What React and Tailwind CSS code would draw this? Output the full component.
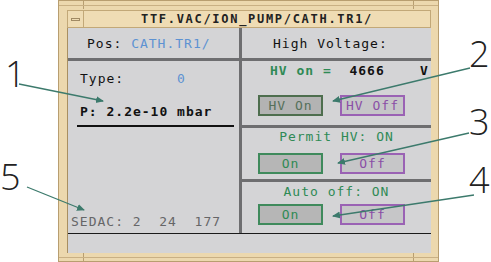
import React from "react";

const mono = { fontFamily: '"DejaVu Sans Mono", "Liberation Mono", monospace' };

// ── small button used in the HV panel ──
const PanelButton = ({ label, tone }) => {
  const styles =
    tone === "on"
      ? "bg-[#b6b6b6] border-[#3f8a5c] text-[#2f8a55]"
      : "bg-[#c6c6c8] border-[#9a62b4] text-[#8a4fa6]";
  return (
    <div
      className={`w-[65px] h-[21px] border-2 flex items-center justify-center text-[13px] leading-[15px] tracking-[1px] ${styles}`}
    >
      {label}
    </div>
  );
};

const HvSection = ({ title, className, btnGap, onLabel, offLabel, onTone = "on" }) => (
  <div className={`flex flex-col ${className}`}>
    <div className="h-[15px] text-center text-[13px] leading-[15px] tracking-[1px] text-[#2f8a55]">
      {title}
    </div>
    <div className={`flex gap-[17px] pl-[16px] ${btnGap}`}>
      <PanelButton label={onLabel} tone={onTone} />
      <PanelButton label={offLabel} tone="off" />
    </div>
  </div>
);

const App = () => {
  return (
    <div className="relative w-[491px] h-[262px] bg-white overflow-hidden" style={mono}>
      {/* window frame */}
      <div className="ml-[58px] w-[381px] h-[262px] border border-[#b89e70] bg-[#ecd8ae] flex flex-col pl-[8px] pr-[7px] pt-[9px] pb-[8px]">
        {/* title bar */}
        <div className="h-[18px] flex border border-[#c2a878] bg-[#efdcb4]">
          <div className="w-[16px] border-r border-[#c2a878] flex items-center justify-center">
            <div className="w-[9px] h-[3px] border border-[#a08a64]" />
          </div>
          <div className="flex-1 text-center text-[12px] leading-[16px] font-bold tracking-[1.7px] text-[#222]">
            TTF.VAC/ION_PUMP/CATH.TR1/
          </div>
        </div>

        {/* content */}
        <div className="flex-1 flex flex-col bg-[#d4d4d6] border-l border-[#a88f62]">
          <div className="h-[30px] flex">
            <div className="w-[171px] flex items-center pl-[19px] text-[13px] leading-[15px] tracking-[1px] text-[#111]">
              Pos:&nbsp;<span className="text-[#5d92d2]">CATH.TR1/</span>
            </div>
            <div className="w-[3px] bg-[#6e6e70]" />
            <div className="flex-1 flex items-center pl-[31px] text-[13px] leading-[15px] tracking-[1px] text-[#111]">
              High Voltage:
            </div>
          </div>
          <div className="h-[3px] bg-[#6e6e70]" />

          <div className="flex-1 flex">
            {/* left panel */}
            <div className="w-[171px] flex flex-col pt-[10px] pb-[4px] text-[13px] leading-[15px] tracking-[1px]">
              <div className="pl-[12px] text-[#111] whitespace-pre">
                Type:{"      "}
                <span className="text-[#5d92d2]">0</span>
              </div>
              <div className="pl-[12px] mt-[18px] font-bold text-[#111]">P: 2.2e-10 mbar</div>
              <div className="ml-[9px] mt-[6px] w-[157px] h-[2px] bg-[#111]" />
              <div className="mt-auto pl-[3px] text-[#666668] whitespace-pre">SEDAC: 2  24  177</div>
            </div>
            <div className="w-[3px] bg-[#6e6e70]" />

            {/* right panel */}
            <div className="flex-1 flex flex-col">
              <div className="h-[64px] flex flex-col pt-[2px]">
                <div className="h-[15px] pl-[28px] text-[13px] leading-[15px] tracking-[1px] font-bold whitespace-pre">
                  <span className="text-[#2f8a55]">HV on =</span>
                  <span className="text-[#111]">{"  4666    V"}</span>
                </div>
                <div className="flex gap-[17px] pl-[16px] mt-[17px]">
                  <div className="w-[65px] h-[21px] border-2 border-[#4e6e4e] bg-[#b3b3b3] flex items-center justify-center text-[13px] leading-[15px] tracking-[1px] text-[#55705a]">
                    HV On
                  </div>
                  <PanelButton label="HV Off" tone="off" />
                </div>
              </div>
              <div className="h-[3px] bg-[#6e6e70]" />
              <HvSection title="Permit HV: ON" className="h-[51px] pt-[1px]" btnGap="mt-[9px]" onLabel="On" offLabel="Off" />
              <div className="h-[3px] bg-[#6e6e70]" />
              <HvSection title="Auto off: ON" className="h-[51px] pt-[2px]" btnGap="mt-[5px]" onLabel="On" offLabel="Off" />
            </div>
          </div>

          <div className="h-[1px] bg-[#1a1a1a]" />
          <div className="h-[19px] bg-[#d4d4d6]" />
        </div>
      </div>

      {/* frame corner ticks */}
      <div className="absolute left-[83px] top-0 w-[1px] h-[9px] bg-[#b89e70]" />
      <div className="absolute left-[413px] top-0 w-[1px] h-[9px] bg-[#b89e70]" />
      <div className="absolute left-[59px] top-[5px] w-[379px] h-[1px] bg-[#c9b084]" />
      <div className="absolute left-[83px] top-[253px] w-[1px] h-[9px] bg-[#b89e70]" />
      <div className="absolute left-[413px] top-[253px] w-[1px] h-[9px] bg-[#b89e70]" />
      <div className="absolute left-[59px] top-[257px] w-[379px] h-[1px] bg-[#c9b084]" />

      {/* annotation callouts */}
      <svg className="absolute inset-0" width="491" height="262" viewBox="0 0 491 262">
        <defs>
          <marker id="ah" markerWidth="8" markerHeight="8" refX="7" refY="4" orient="auto" markerUnits="userSpaceOnUse">
            <path d="M0,0.5 L8,4 L0,7.5 Z" fill="#3c7a6c" />
          </marker>
        </defs>
        <g stroke="#3c7a6c" strokeWidth="1.3" fill="none" markerEnd="url(#ah)">
          <line x1="19" y1="84" x2="103" y2="101" />
          <line x1="470" y1="68" x2="333" y2="101" />
          <line x1="469" y1="133" x2="338" y2="163" />
          <line x1="474" y1="195" x2="333" y2="216" />
          <line x1="27" y1="187" x2="84" y2="210" />
        </g>
      </svg>
      {[
        { n: "1", cls: "left-[5px] top-[56px]" },
        { n: "2", cls: "left-[469px] top-[36px]" },
        { n: "3", cls: "left-[469px] top-[104px]" },
        { n: "4", cls: "left-[469px] top-[162px]" },
        { n: "5", cls: "left-[0px] top-[159px]" },
      ].map((a) => (
        <div
          key={a.n}
          className={`absolute text-[36px] leading-[36px] font-light text-[#222] ${a.cls}`}
          style={{ fontFamily: '"Open Sans", "DejaVu Sans", sans-serif' }}
        >
          {a.n}
        </div>
      ))}
    </div>
  );
};

export default App;
